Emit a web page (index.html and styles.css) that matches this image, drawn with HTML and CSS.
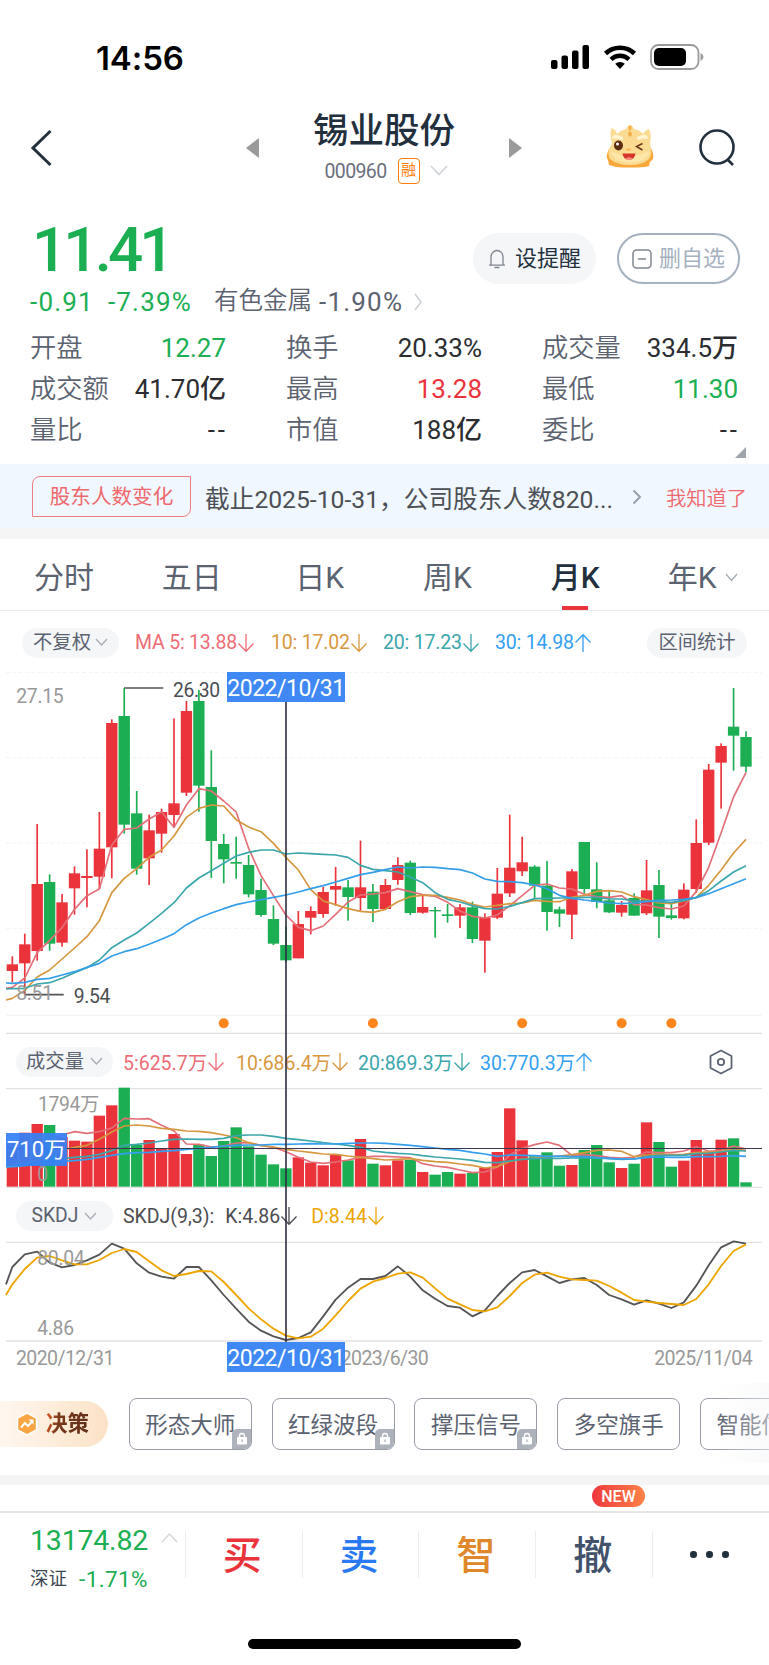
FILE: index.html
```html
<!DOCTYPE html>
<html lang="zh-CN">
<head>
    <meta charset="UTF-8">
    <meta name="viewport" content="width=device-width, initial-scale=1.0">
    <title>锡业股份 000960</title>
    <link rel="stylesheet" href="styles.css">
</head>
<body>
    <div class="status-bar">
        <span class="time">14:56</span>
        <div class="status-icons">
            <svg width="40" height="26" viewBox="0 0 40 26">
                <rect x="1" y="16" width="6.5" height="9" rx="2"/>
                <rect x="11.5" y="11.5" width="6.5" height="13.5" rx="2"/>
                <rect x="22" y="6.5" width="6.5" height="18.5" rx="2"/>
                <rect x="32.5" y="1" width="6.5" height="24" rx="2"/>
            </svg>
            <svg class="wifi" width="34" height="26" viewBox="0 0 34 26">
                <path d="M2.5 9.5a21 21 0 0 1 29 0" fill="none" stroke="#000" stroke-width="4.6"/>
                <path d="M8 15.3a13 13 0 0 1 18 0" fill="none" stroke="#000" stroke-width="4.4"/>
                <path d="M17 25l-4.8-5.2a7 7 0 0 1 9.6 0z"/>
            </svg>
            <svg width="54" height="26" viewBox="0 0 54 26">
                <rect x="1" y="1" width="47.5" height="24" rx="7.5" fill="none" stroke="#9b9b9b" stroke-width="1.8"/>
                <rect x="4" y="4" width="32" height="18" rx="5"/>
                <path d="M50.5 9v8q3-1.5 3-4t-3-4z" fill="#9b9b9b"/>
            </svg>
        </div>
    </div>

    <div class="nav">
        <svg class="back" width="24" height="38" viewBox="0 0 24 38"><path d="M21.5 2L4 19l17.5 17" fill="none" stroke="#22303e" stroke-width="3"/></svg>
        <svg class="prev" width="14" height="20" viewBox="0 0 14 20"><path d="M13 0v20L0 10z" fill="#9a9a9a"/></svg>
        <div class="stock">
            <h1>锡业股份</h1>
            <div class="code">
                <span class="num">000960</span>
                <span class="rong">融</span>
                <svg width="18" height="12" viewBox="0 0 18 12"><path d="M1 1l8 8.5L17 1" fill="none" stroke="#cfd3d8" stroke-width="1.6"/></svg>
            </div>
        </div>
        <svg class="next" width="14" height="20" viewBox="0 0 14 20"><path d="M1 0v20l13-10z" fill="#9a9a9a"/></svg>
        <svg class="mascot" width="48" height="44" viewBox="0 0 48 44">
            <path d="M3 25Q-1 33 2 36l1 5 4 1 3 1q13 1 29 0l4-1 1-4 3-3q1-6-2-11z" fill="#f8a83a"/>
            <path d="M6 20Q3 6 6 4q4 2 5 6 4-4 9-5 2-4 4-4t4 4q6 1 9 5 2-4 6-5 3 5 1 15 3 9-1 15-6 6-19 6T4 35Q0 27 6 20z" fill="#fbdb92"/>
            <path d="M5 27q18 10 38 0-1 11-19 12Q7 38 5 27z" fill="#fde6a8"/>
            <path d="M24 1q3 3 0 6-3-3 0-6zM24 7q4 3 0 6-4-3 0-6z" fill="#f3ae4a"/>
            <path d="M6 15q0-5 6-4l5 2q1 3-2 3-4-2-9-1zM42 15q0-5-6-4l-5 2q-1 3 2 3 4-2 9-1z" fill="#fff3d2"/>
            <ellipse cx="12.5" cy="21.500" rx="4.5" ry="5" fill="#5e2d14"/>
            <circle cx="11.500" cy="20" r="1.500" fill="#fff"/>
            <path d="M36.500 19.500l-6 3 6 3.500" fill="none" stroke="#6b3518" stroke-width="1.500"/>
            <ellipse cx="22.500" cy="25.500" rx="2.500" ry="1.500" fill="#f9bd62"/>
            <path d="M16.500 29.500h13q-1 6.500-6.500 6.500t-6.500-6.500z" fill="#d8342c"/>
            <path d="M19.500 34.500q3.500-2.500 7 0-1.500 1.500-3.500 1.500t-3.500-1.500z" fill="#ff8d7e"/>
        </svg>
        <svg class="search" width="38" height="38" viewBox="0 0 38 38"><g fill="none" stroke="#22303e" stroke-width="2.6"><circle cx="18" cy="18" r="16.5"/><path d="M28 30l6 6"/></g></svg>
    </div>

    <div class="quote">
        <div class="quote-top">
            <span class="price num">11.41</span>
            <div class="actions">
                <div class="btn remind">
                    <svg width="18" height="20" viewBox="0 0 18 20"><path d="M1 16.2h16M3 16V8a6 6.5 0 0 1 12 0v8M6.5 18.5h5" fill="none" stroke="#80868f" stroke-width="1.3"/></svg>
                    设提醒
                </div>
                <div class="btn remove">
                    <svg width="20" height="20" viewBox="0 0 20 20"><rect x="1" y="1" width="18" height="18" rx="3.5" fill="none" stroke="#80868f" stroke-width="1.5"/><path d="M6 10h8" stroke="#80868f" stroke-width="1.5"/></svg>
                    删自选
                </div>
            </div>
        </div>
        <div class="change">
            <span class="num green">-0.91</span>
            <span class="num green pct">-7.39%</span>
            <span class="sector">有色金属</span>
            <span class="num">-1.90%</span>
            <svg width="10" height="18" viewBox="0 0 10 18"><path d="M2 1l6 8-6 8" fill="none" stroke="#c9cdd3" stroke-width="1.4"/></svg>
        </div>
        <div class="stats">
            <div><label>开盘</label><b class="green">12.27</b></div>
            <div><label>换手</label><b>20.33%</b></div>
            <div><label>成交量</label><b>334.5万</b></div>
            <div><label>成交额</label><b>41.70亿</b></div>
            <div><label>最高</label><b class="red">13.28</b></div>
            <div><label>最低</label><b class="green">11.30</b></div>
            <div><label>量比</label><b class="empty">--</b></div>
            <div><label>市值</label><b>188亿</b></div>
            <div><label>委比</label><b class="empty">--</b></div>
        </div>
        <i class="expand"></i>
    </div>

    <div class="notice">
        <span class="tag">股东人数变化</span>
        <span class="text">截止2025-10-31，公司股东人数820...</span>
        <svg width="10" height="16" viewBox="0 0 10 16"><path d="M1.5 1.5L8 8l-6.5 6.5" fill="none" stroke="#98a0ab" stroke-width="2"/></svg>
        <span class="ok">我知道了</span>
    </div>

    <div class="tabs">
        <span>分时</span>
        <span>五日</span>
        <span>日K</span>
        <span>周K</span>
        <span class="active">月K</span>
        <span>年K<svg width="13" height="9" viewBox="0 0 13 9"><path d="M1 1l5.5 6.5L12 1" fill="none" stroke="#a5abb3" stroke-width="1.3"/></svg></span>
    </div>

    <div class="charts">
        <div class="bar bar-price">
            <span class="pill">不复权<svg width="13" height="9" viewBox="0 0 13 9"><path d="M1 1l5.5 6L12 1" fill="none" stroke="#a5abb3" stroke-width="1.2"/></svg></span>
            <span class="ma ma5">MA 5: 13.88<svg class="arrow"><use href="#down"/></svg></span>
            <span class="ma ma10">10: 17.02<svg class="arrow"><use href="#down"/></svg></span>
            <span class="ma ma20">20: 17.23<svg class="arrow"><use href="#down"/></svg></span>
            <span class="ma ma30">30: 14.98<svg class="arrow"><use href="#up"/></svg></span>
            <span class="pill range">区间统计</span>
        </div>
        <svg id="price" class="plot" width="769" height="371" viewBox="0 0 2307 1113"></svg>

        <div class="bar bar-vol">
            <span class="pill">成交量<svg width="13" height="9" viewBox="0 0 13 9"><path d="M1 1l5.5 6L12 1" fill="none" stroke="#a5abb3" stroke-width="1.2"/></svg></span>
            <span class="ma ma5">5:625.7万<svg class="arrow"><use href="#down"/></svg></span>
            <span class="ma ma10">10:686.4万<svg class="arrow"><use href="#down"/></svg></span>
            <span class="ma ma20">20:869.3万<svg class="arrow"><use href="#down"/></svg></span>
            <span class="ma ma30">30:770.3万<svg class="arrow"><use href="#up"/></svg></span>
            <svg class="setting" width="24" height="26" viewBox="0 0 24 26"><path d="M12 1.5l10.5 5.5v12L12 24.5 1.5 19V7z" fill="none" stroke="#5d6574" stroke-width="1.8" stroke-linejoin="round"/><circle cx="12" cy="13" r="3.2" fill="none" stroke="#5d6574" stroke-width="1.8"/></svg>
        </div>
        <svg id="volume" class="plot" width="769" height="104" viewBox="0 135 2307 312"></svg>

        <div class="bar bar-kdj">
            <span class="pill">SKDJ<svg width="13" height="9" viewBox="0 0 13 9"><path d="M1 1l5.5 6L12 1" fill="none" stroke="#a5abb3" stroke-width="1.2"/></svg></span>
            <span class="ma dark">SKDJ(9,3):</span>
            <span class="ma dark k">K:4.86<svg class="arrow"><use href="#down"/></svg></span>
            <span class="ma gold">D:8.44<svg class="arrow"><use href="#down"/></svg></span>
        </div>
        <svg id="kdj" class="plot" width="769" height="103" viewBox="0 600 2307 309"></svg>

        <div class="dates">
            <span>2020/12/31</span>
            <span class="mid">2023/6/30</span>
            <span>2025/11/04</span>
        </div>

        <!-- crosshair -->
        <i class="cross-v"></i>
        <i class="cross-h"></i>
        <span class="cross-date">2022/10/31</span>
        <span class="cross-date axis">2022/10/31</span>
        <span class="cross-value">710万</span>
    </div>

    <div class="tools">
        <div class="decision">
            <svg width="24" height="26" viewBox="0 0 24 26"><path d="M12 2l9.5 5.2v11.600L12 24l-9.5-5.200V7.200z" fill="#f9a544" stroke="#fff" stroke-width="1.5" stroke-linejoin="round"/><path d="M6 16.5l4-4.5 3 3 4-4.500" fill="none" stroke="#fff" stroke-width="2"/><path d="M13.500 8.500h5v5z" fill="#fff"/></svg>
            <b>决策</b>
        </div>
        <span class="tool">形态大师<i class="lock"><svg width="12" height="14" viewBox="0 0 12 14"><use href="#lock"/></svg></i></span>
        <span class="tool">红绿波段<i class="lock"><svg width="12" height="14" viewBox="0 0 12 14"><use href="#lock"/></svg></i></span>
        <span class="tool">撑压信号<i class="lock"><svg width="12" height="14" viewBox="0 0 12 14"><use href="#lock"/></svg></i></span>
        <span class="tool">多空旗手</span>
        <span class="tool">智能信号</span>
    </div>

    <div class="divider"></div>
    <div class="new-row"><span class="new">NEW</span></div>

    <div class="bottom">
        <div class="index">
            <div class="index-price"><span class="num green">13174.82</span><svg width="17" height="10" viewBox="0 0 17 10"><path d="M1 9l7.5-8L16 9" fill="none" stroke="#d3d6da" stroke-width="1.5"/></svg></div>
            <div class="index-sub">深证<span class="num green">-1.71%</span></div>
        </div>
        <div class="action buy">买</div>
        <div class="action sell">卖</div>
        <div class="action smart">智</div>
        <div class="action cancel">撤</div>
        <div class="action more"><i></i><i></i><i></i></div>
    </div>
    <div class="home"></div>

    <svg width="0" height="0" class="defs">
        <symbol id="down" viewBox="0 0 17 20"><path d="M8.5 1v17M1 10.5l7.5 7.7 7.5-7.7" fill="none" stroke="currentColor" stroke-width="1.3"/></symbol>
        <symbol id="up" viewBox="0 0 17 20"><path d="M8.5 19V2M1 9.5l7.5-7.7L16 9.5" fill="none" stroke="currentColor" stroke-width="1.3"/></symbol>
        <symbol id="lock" viewBox="0 0 12 14"><path d="M3.500 6V4a2.500 2.500 0 0 1 5 0v2" fill="none" stroke="#fff" stroke-width="1.3"/><rect x="1" y="5" width="10" height="7.500" rx="1" fill="#fff"/><path d="M6 7.500v2.500" stroke="#aeb2bb" stroke-width="1.3"/></symbol>
    </svg>
    <script src="chart.js"></script>
</body>
</html>
```
FILE: styles.css
```css
* {
    box-sizing: border-box;
}

body {
    margin: 0;
    width: 769px;
    height: 1665px;
    overflow: hidden;
    background: #fff;
    color: #5b6270;
    font-family: Roboto, "Noto Sans CJK SC", sans-serif;
}

svg {
    display: block;
    flex: none;
}

i {
    display: block;
}

.defs {
    position: absolute;
}

.num {
    font-weight: 500;
}

.green {
    color: #1bae52;
}

.red {
    color: #eb333b;
}

/* Status bar */
.status-bar {
    height: 96px;
    padding: 38px 65px 0 96px;
    display: flex;
    justify-content: space-between;
}

.time {
    font-family: Inter, sans-serif;
    font-size: 33px;
    font-weight: 600;
    line-height: 40px;
    letter-spacing: -0.1px;
    color: #000;
}

.status-icons {
    display: flex;
    gap: 13px;
    padding-top: 6px;
}

/* Nav */
.nav {
    height: 114px;
    padding: 0 32px 0 29px;
    display: flex;
    align-items: flex-start;
}

.back {
    margin-top: 33px;
}

.prev {
    margin: 42px 0 0 193px;
}

.stock {
    width: 251px;
    display: flex;
    flex-direction: column;
    align-items: center;
}

h1 {
    margin: 15px 0 0;
    font-size: 35.5px;
    font-weight: 500;
    line-height: 41px;
    color: #22303e;
}

.code {
    margin: 5px 0 0 4px;
    display: flex;
    align-items: center;
    height: 28px;
    color: #6b6f7d;
}

.code .num {
    font-size: 19.5px;
    letter-spacing: -0.6px;
    font-weight: 400;
}

.rong {
    width: 22px;
    height: 26px;
    margin: 0 10px 0 11px;
    border: 1.5px solid #ff7e0e;
    border-radius: 4px;
    font-size: 15px;
    line-height: 23px;
    text-align: center;
    color: #ff7e0e;
}

.next {
    margin-top: 42px;
}

.mascot {
    margin: 28px 0 0 84px;
}

.search {
    margin: 33px 0 0 45px;
}

/* Quote */
.quote {
    position: relative;
    height: 254px;
    padding: 0 30px;
}

.quote-top {
    display: flex;
    justify-content: space-between;
    height: 77px;
}

.price {
    margin-left: 2px;
    font-size: 62px;
    line-height: 79px;
    letter-spacing: -3.9px;
    color: #1bae52;
}

.actions {
    display: flex;
    gap: 21px;
    margin: 23px -1px 0 0;
}

.btn {
    width: 123px;
    height: 51px;
    border-radius: 26px;
    display: flex;
    align-items: center;
    justify-content: center;
    gap: 9px;
    font-size: 22px;
    line-height: 51px;
}

.remind {
    background: #f4f6f8;
    color: #22303e;
}

.remove {
    border: 2px solid #a5b1bf;
    color: #a5b1bf;
    gap: 7px;
}

.change {
    display: flex;
    align-items: center;
    height: 30px;
    font-size: 26px;
}

.change .num {
    font-weight: 450;
    letter-spacing: 1.2px;
}

.change .pct {
    margin-left: 14px;
}

.sector {
    margin: 0 7px 0 22px;
    font-size: 24.5px;
    line-height: 28px;
    padding-bottom: 2px;
    font-weight: 350;
}

.change svg {
    margin-left: 10px;
}

.stats {
    display: grid;
    grid-template-columns: repeat(3, 196px);
    column-gap: 60px;
    grid-auto-rows: 41px;
    margin-top: 11px;
}

.stats div {
    display: flex;
    justify-content: space-between;
    align-items: center;
}

label {
    font-size: 26.3px;
    font-weight: 350;
    line-height: 41px;
}

.stats b {
    font-size: 26px;
    font-weight: 450;
    line-height: 41px;
    color: #2b2d31;
}

.stats b.green {
    color: #1bae52;
}

.stats b.red {
    color: #eb333b;
}

.stats b.empty {
    letter-spacing: 3px;
    margin-right: -2px;
}

.expand {
    position: absolute;
    right: 23px;
    bottom: 6px;
    border-left: 11px solid transparent;
    border-bottom: 11px solid #a0a4ab;
}

/* Notice */
.notice {
    height: 75px;
    padding: 1px 21px 0 32px;
    display: flex;
    align-items: center;
    background: #f0f7fe;
    border-bottom: 11px solid #f5f5f5;
}

.tag {
    width: 159px;
    height: 41px;
    border: 1.5px solid #f07f83;
    border-radius: 8px 0 8px 0;
    font-size: 20.6px;
    line-height: 41px;
    text-align: center;
    color: #ee686d;
}

.text {
    width: 414px;
    margin-left: 14px;
    font-size: 24.7px;
    white-space: nowrap;
    color: #4c4f55;
}

.notice svg {
    margin-left: 13px;
}

.ok {
    margin-left: 24px;
    font-size: 20.3px;
    font-weight: 350;
    white-space: nowrap;
    color: #ee686d;
}

/* Tabs */
.tabs {
    height: 72px;
    padding-right: 2px;
    display: flex;
    border-bottom: 1.5px solid #e8e9eb;
    font-size: 30px;
    line-height: 74px;
}

.tabs span {
    flex: 1;
    display: flex;
    align-items: center;
    justify-content: center;
    position: relative;
    padding-top: 6px;
}

.tabs svg {
    margin-left: 9px;
}

.tabs .active {
    font-weight: 500;
    color: #22303e;
}

.tabs .active::after {
    content: "";
    position: absolute;
    left: 50%;
    bottom: 0;
    width: 26px;
    height: 4px;
    margin-left: -13px;
    background: #eb333b;
}

/* Charts */
.charts {
    position: relative;
    height: 762px;
}

.bar {
    display: flex;
    align-items: center;
    padding: 0 0 0 16px;
    font-size: 19.5px;
}

.bar-price {
    height: 54px;
    padding: 9px 22px 0 22px;
}

.bar-vol {
    height: 49px;
    padding-top: 2px;
}

.bar-kdj {
    height: 51px;
    padding-top: 3px;
}

.pill {
    width: 97px;
    height: 30px;
    margin-right: 10px;
    border-radius: 15px;
    background: #f4f6f8;
    display: flex;
    align-items: center;
    justify-content: center;
    gap: 6px;
    font-size: 19.3px;
    line-height: 30px;
}

.bar-price .pill {
    margin-right: 16px;
    gap: 4px;
}

.bar-price .pill.range {
    width: 100px;
    margin: 0 0 0 auto;
}

.ma {
    display: flex;
    align-items: center;
    white-space: nowrap;
}

.arrow {
    width: 18px;
    height: 20px;
}

.ma5 { width: 136px; color: #ee6c76; }
.ma10 { width: 112px; color: #d8983f; }
.ma20 { width: 112px; color: #3ba6ab; }
.ma30 { color: #349ff0; }

.bar-price .ma { letter-spacing: -0.2px; }

.bar-vol .ma5 { width: 113px; }
.bar-vol .ma10 { width: 122px; }
.bar-vol .ma20 { width: 122px; }

.dark { color: #4b4d52; }
.gold { color: #eda500; }
.k { margin: 0 13px 0 11px; }

.setting {
    margin-left: auto;
    margin-right: 36px;
}

.dates {
    display: flex;
    height: 30px;
    padding: 0 17px 0 16px;
    align-items: center;
    font-size: 19.5px;
    letter-spacing: -0.6px;
    color: #999;
}

.dates .mid {
    margin: 0 auto 0 227px;
}

.cross-v {
    position: absolute;
    left: 285px;
    top: 91px;
    width: 1.5px;
    height: 641px;
    background: rgba(45, 45, 65, 0.8);
}

.cross-h {
    position: absolute;
    left: 6px;
    top: 537px;
    width: 756px;
    height: 1px;
    background: #3c3750;
}

.cross-date {
    position: absolute;
    left: 227px;
    top: 61px;
    width: 118px;
    height: 30px;
    background: #4089f5;
    font-size: 23px;
    line-height: 34px;
    letter-spacing: -0.5px;
    text-align: center;
    color: #fff;
}

.cross-date.axis {
    top: 731px;
}

.cross-value {
    position: absolute;
    left: 6px;
    top: 522px;
    width: 61px;
    height: 33px;
    background: rgba(54, 129, 245, 0.93);
    font-size: 22px;
    line-height: 34px;
    text-align: center;
    white-space: nowrap;
    color: #fff;
}

.plot text {
    font-size: 58px;
    letter-spacing: -1px;
    fill: #999;
}

.plot text.mark {
    fill: #4b4d52;
}

/* Tools */
.tools {
    position: relative;
    height: 102px;
    padding-top: 25px;
    display: flex;
    gap: 19.8px;
    overflow: hidden;
}

.tools::after {
    content: "";
    position: absolute;
    right: 0;
    top: 10px;
    width: 53px;
    height: 80px;
    background: linear-gradient(90deg, rgba(255, 255, 255, 0), rgba(244, 245, 247, 0.5));
}

.decision {
    flex: none;
    width: 108px;
    height: 46px;
    margin: 3px 1px 0 0;
    padding-left: 15px;
    display: flex;
    align-items: center;
    gap: 7px;
    background: linear-gradient(90deg, #fff7ef, #fbe2c6);
    border-radius: 0 23px 23px 0;
    font-size: 21.5px;
    line-height: 46px;
}

.decision b {
    font-weight: 700;
    background: linear-gradient(100deg, #ee6020, #7b3a1c 30%, #5d2c18);
    -webkit-background-clip: text;
    background-clip: text;
    color: transparent;
}

.tool {
    position: relative;
    flex: none;
    width: 123px;
    height: 52px;
    border: 1.5px solid #989da8;
    border-radius: 8px;
    font-size: 22.5px;
    line-height: 52px;
    text-align: center;
    overflow: hidden;
}

.lock {
    position: absolute;
    right: 0;
    bottom: 0;
    width: 19px;
    height: 20px;
    padding: 3px 0 0 4px;
    border-radius: 5px 0 0 0;
    background: #aeb2bb;
}

.divider {
    height: 10px;
    background: #f5f5f5;
}

.new-row {
    height: 28px;
    border-bottom: 2px solid #e6e6e6;
}

.new {
    display: block;
    width: 53px;
    height: 22px;
    margin-left: 592px;
    border-radius: 11px;
    background: linear-gradient(90deg, #ee383d, #ff8247);
    font-size: 16px;
    font-weight: 500;
    line-height: 23px;
    text-align: center;
    color: #fff;
}

/* Bottom bar */
.bottom {
    height: 126px;
    padding-top: 18px;
    display: flex;
}

.index {
    width: 185px;
    padding-left: 30px;
}

.index-price {
    display: flex;
    align-items: flex-start;
    gap: 13px;
    height: 39px;
    margin-top: -5px;
    font-size: 28.5px;
    line-height: 33px;
}

.index-price .num {
    font-weight: 450;
    letter-spacing: -0.2px;
    margin-top: -2px;
}

.index-price svg {
    margin-top: 7px;
}

.index-sub {
    display: flex;
    gap: 12px;
    font-size: 18.5px;
    line-height: 28px;
    color: #3b4552;
}

.index-sub .num {
    font-size: 22.5px;
    font-weight: 450;
    letter-spacing: 0.4px;
}

.action {
    width: 117px;
    height: 47px;
    padding-right: 3px;
    border-left: 1.5px solid #ececee;
    font-size: 39px;
    font-weight: 500;
    line-height: 50px;
    text-align: center;
}

.buy { color: #eb333b; }
.sell { color: #2979f2; }
.smart { color: #e0872b; }
.cancel { color: #42526a; }

.more {
    display: flex;
    align-items: center;
    justify-content: center;
    gap: 9.5px;
}

.more i {
    width: 6.5px;
    height: 6.5px;
    border-radius: 50%;
    background: #22303e;
}

.home {
    width: 273px;
    height: 10px;
    margin: 0 auto;
    border-radius: 5px;
    background: #000;
}
```
FILE: chart.js
```js
const RED = "#eb333b";
const GREEN = "#1bae52";
const X0 = 37;
const STEP = 37.305;
const BODY = 34;

// [up, body top, body bottom, high, low]
const candles = [
    [1,898,918,874,952],[1,838,895,806,988],[1,657,858,477,887],[0,651,836,628,857],[1,712,833,687,845],
    [1,625,670,604,749],[1,633,639,553,727],[1,551,635,441,672],[1,174,547,163,640],[0,153,479,69,506],
    [0,445,611,378,629],[1,496,580,449,660],[1,441,506,431,563],[1,415,450,160,488],[1,138,383,108,393],
    [0,108,362,75,440],[0,366,528,256,639],[0,537,583,507,655],[0,591,596,515,641],[0,600,688,570,697],
    [0,675,750,641,755],[0,762,836,721,840],[0,840,886,785,892],[1,777,880,738,880],[1,738,758,724,808],
    [1,681,747,665,758],[1,663,674,606,722],[0,667,696,645,767],[1,667,699,527,737],[0,680,732,657,771],
    [1,660,732,642,734],[1,600,645,577,659],[0,593,744,587,750],[1,726,743,688,746],[0,735,739,726,818],
    [0,748,753,717,773],[1,727,752,717,789],[0,727,822,710,834],[1,758,827,745,923],[1,686,758,609,762],
    [1,608,685,449,696],[1,592,619,515,633],[0,605,662,601,703],[0,662,741,588,797],[0,733,746,725,786],
    [1,619,749,612,822],[0,531,672,531,686],[0,673,711,592,730],[0,706,742,676,744],[1,720,743,708,755],
    [0,699,752,685,752],[1,676,745,585,750],[0,660,755,615,819],[0,751,759,714,764],[1,674,760,655,763],
    [1,534,672,463,684],[1,314,533,297,540],[1,243,293,235,431],[0,185,212,69,317],[0,216,305,199,321]
];

// first value of each line sits on the left edge of the plot
const ma = {
    "#e36f78": [970,967,939,863,826,788,733,692,672,540,493,489,462,441,487,420,371,378,408,441,550,632,692,750,787,797,783,748,711,690,687,683,671,680,689,694,712,738,754,759,750,722,692,661,657,669,672,688,695,697,692,719,720,728,732,723,680,607,503,396,322],
    "#d5973f": [1005,1000,976,936,915,882,849,815,767,683,640,611,577,555,513,457,430,420,423,464,486,500,535,577,615,674,708,719,731,739,742,733,710,695,691,691,697,705,718,726,721,716,714,706,709,710,697,691,679,677,681,695,704,714,716,708,697,661,615,564,523],
    "#3ba6ab": [972,971,970,957,953,940,923,908,885,848,825,804,775,745,713,669,639,617,595,573,562,555,555,567,564,566,568,570,577,601,613,617,621,636,653,683,703,711,722,731,732,724,713,701,700,699,699,697,697,702,702,708,708,710,712,707,697,677,648,621,602],
    "#349fe8": [954,955,952,943,940,930,920,907,895,873,860,851,838,823,806,779,759,744,731,719,711,704,697,690,681,671,662,651,640,629,622,614,606,609,606,607,611,614,624,642,649,650,653,660,671,691,700,705,709,714,716,714,710,706,705,703,698,686,671,656,641]
};

const volumes = [
    310,278,252,255,291,302,305,227,196,143,315,300,326,282,342,314,348,303,262,319,
    344,373,385,352,368,376,345,361,297,371,376,361,360,396,404,396,401,399,383,336,
    205,301,349,337,377,375,330,315,367,384,371,247,306,380,362,300,335,299,295,427
];

const volMa = {
    "#e36f78": [380,375,350,320,298,285,275,280,275,264,235,237,236,256,273,312,313,321,318,309,308,316,322,335,352,366,370,366,360,352,349,349,351,353,371,378,382,390,398,396,382,345,325,314,306,316,346,344,347,352,354,352,336,338,338,333,320,334,331,318,327],
    "#d5973f": [380,378,370,360,345,330,322,316,298,276,258,255,258,265,268,273,274,278,285,293,308,317,321,328,333,337,342,343,348,352,356,360,358,356,361,365,367,372,376,384,380,364,357,354,350,348,344,338,331,330,334,350,345,342,344,343,338,336,334,326,332],
    "#3ba6ab": [379,378,373,367,361,356,352,349,343,332,316,313,309,303,298,297,298,298,295,287,285,285,289,295,299,303,308,312,316,322,333,337,340,342,347,351,354,357,361,367,368,363,358,356,355,355,354,354,354,356,358,357,350,346,346,346,341,340,336,331,333],
    "#349ff0": [381,380,377,373,369,364,362,358,352,346,341,338,337,334,332,328,325,322,318,316,315,315,313,313,312,311,312,312,310,309,309,310,313,316,320,324,328,331,337,342,349,345,346,347,349,348,350,350,353,355,357,357,353,351,352,352,350,350,349,347,349]
};

const kdj = {
    "#555": [733,681,643,635,668,682,675,661,644,611,626,670,698,710,716,681,681,721,765,806,845,872,889,900,894,877,829,779,743,717,717,708,679,710,751,776,798,803,829,811,768,729,697,690,709,729,718,714,735,765,778,794,781,791,804,787,737,676,622,604,611],
    "#eda500": [765,733,687,653,648,661,673,673,660,639,627,636,664,691,708,702,693,694,726,765,805,838,866,887,895,890,866,826,783,746,725,714,701,697,713,745,776,793,810,814,802,768,729,704,698,710,718,720,722,738,758,780,785,789,792,795,777,733,678,633,613]
};

const x = i => X0 + i * STEP;

function rect(x, y, w, h, color) {
    return `<rect x="${x.toFixed(1)}" y="${y}" width="${w}" height="${h}" fill="${color}"/>`;
}

function hline(y, color, width, x1 = 18, x2 = 2286, dash = "none") {
    return `<line x1="${x1}" x2="${x2}" y1="${y}" y2="${y}" stroke="${color}" stroke-width="${width}" stroke-dasharray="${dash}"/>`;
}

function lines(set, width = 5) {
    return Object.entries(set).map(([color, ys]) => {
        const pts = ys.map((y, i) => `${i ? x(i - 1).toFixed(1) : 18},${y}`).join(" ");
        return `<polyline points="${pts}" fill="none" stroke="${color}" stroke-width="${width}" stroke-linejoin="round"/>`;
    }).join("");
}

// price
let out = "";
[22, 278, 534, 790].forEach(y => out += hline(y, "#f2f2f4", 3, 18, 2286, "12 7"));
out += hline(1051, "#f2f2f4", 3);
out += hline(1105, "#dedee0", 4);
out += hline(69, "#555", 5, 372, 490) + hline(989, "#555", 5, 74, 191);
out += '<text class="mark" x="519" y="95">26.30</text><text class="mark" x="221" y="1015">9.54</text>';
candles.forEach(([up, top, bottom, high, low], i) => {
    const color = up ? RED : GREEN;
    out += rect(x(i) - 2.5, high, 5, low - high, color);
    out += rect(x(i) - BODY / 2, top, BODY, bottom - top, color);
});
out += lines(ma);
out += '<text x="49" y="114">27.15</text><text x="49" y="1004">8.51</text>';
[17, 29, 41, 49, 53].forEach(i => out += `<circle cx="${x(i)}" cy="1075" r="15" fill="#ff851c"/>`);
document.getElementById("price").innerHTML = out;

// volume
out = hline(146, "#e2e2e4", 4) + hline(442, "#e2e2e4", 4);
volumes.forEach((top, i) => out += rect(x(i) - BODY / 2, top, BODY, 440 - top, candles[i][0] ? RED : GREEN));
out += lines(volMa);
out += '<text x="114" y="214">1794万</text><text x="112" y="422">0</text>';
document.getElementById("volume").innerHTML = out;

// skdj
out = hline(607, "#e2e2e4", 4) + hline(903, "#e2e2e4", 5);
out += lines(kdj, 5.5);
out += '<text x="112" y="675">80.04</text><text x="112" y="884">4.86</text>';
document.getElementById("kdj").innerHTML = out;
```
